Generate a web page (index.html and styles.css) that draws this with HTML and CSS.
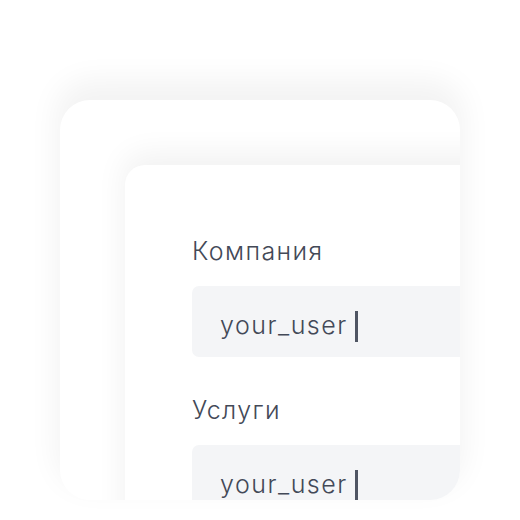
FILE: index.html
```html
<!DOCTYPE html>
<html lang="ru">
<head>
<meta charset="utf-8">
<link rel="stylesheet" href="styles.css">
</head>
<body>
<div class="stage">
  <div class="outer">
    <div class="inner">
      <div class="field">
        <div class="label">Компания</div>
        <div class="input"><span class="value">your_user</span><span class="caret"></span></div>
      </div>
      <div class="field">
        <div class="label">Услуги</div>
        <div class="input"><span class="value">your_user</span><span class="caret"></span></div>
      </div>
    </div>
  </div>
</div>
</body>
</html>
```
FILE: styles.css
```css
html, body {
  margin: 0;
  padding: 0;
  background: #ffffff;
}
.stage {
  width: 520px;
  height: 520px;
  padding: 100px 0 0 60px;
  box-sizing: border-box;
  overflow: hidden;
}
.outer {
  width: 400px;
  height: 400px;
  border-radius: 30px;
  background: #ffffff;
  box-shadow: 0 -16px 30px 4px rgba(0, 0, 0, 0.05);
  overflow: hidden;
  padding: 65px 0 0 65px;
  box-sizing: border-box;
}
.inner {
  width: 420px;
  height: 400px;
  border-radius: 20px;
  background: #ffffff;
  box-shadow: 0 -10px 30px 2px rgba(0, 0, 0, 0.055);
  padding: 71px 0 0 67px;
  box-sizing: border-box;
  display: flex;
  flex-direction: column;
  gap: 38px;
  font-family: Inter, "Noto Sans", sans-serif;
  font-weight: 300;
  color: #434957;
}
.field {
  display: flex;
  flex-direction: column;
  gap: 20px;
}
.label {
  font-size: 25px;
  line-height: 30px;
  letter-spacing: 1.4px;
}
.input {
  height: 71px;
  border-radius: 7px;
  background: #f4f5f7;
  display: flex;
  align-items: center;
  padding: 7px 0 0 28px;
  box-sizing: border-box;
  gap: 7px;
}
.value {
  font-size: 25px;
  line-height: 30px;
  letter-spacing: 1.5px;
}
.caret {
  width: 3px;
  height: 31px;
  background: #4f5563;
  margin-top: 2px;
}
```
